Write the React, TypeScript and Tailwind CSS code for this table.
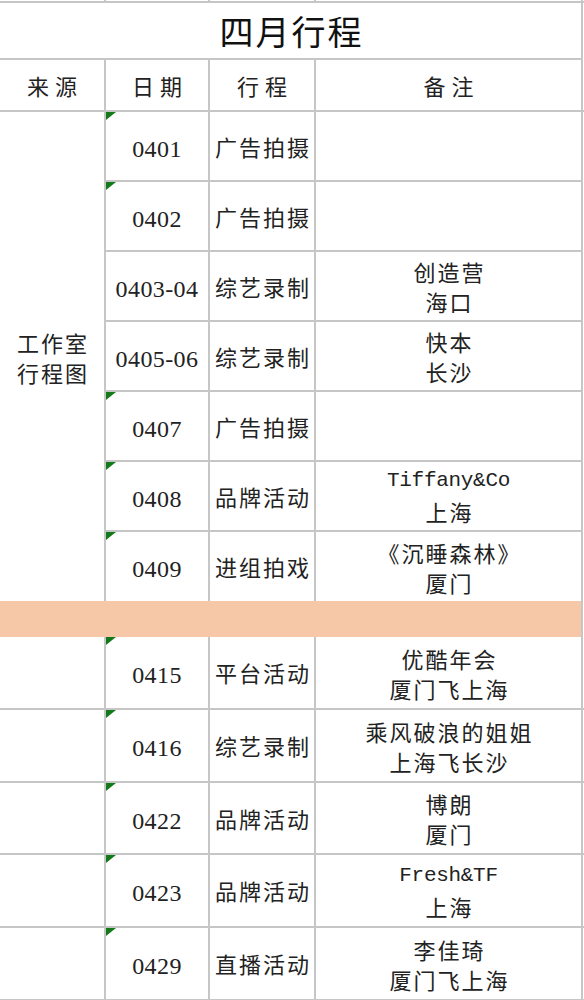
const cjk = { fontFamily: '"Noto Sans CJK SC", "Noto Sans", sans-serif' };

type Row = {
  date: string;
  kind: string;
  note: string[];
  mark: boolean;
  h: string;
};

const firstBlock: Row[] = [
  { date: "0401", kind: "广告拍摄", note: [], mark: true, h: "h-[70px]" },
  { date: "0402", kind: "广告拍摄", note: [], mark: true, h: "h-[70px]" },
  { date: "0403-04", kind: "综艺录制", note: ["创造营", "海口"], mark: false, h: "h-[70px]" },
  { date: "0405-06", kind: "综艺录制", note: ["快本", "长沙"], mark: false, h: "h-[70px]" },
  { date: "0407", kind: "广告拍摄", note: [], mark: true, h: "h-[70px]" },
  { date: "0408", kind: "品牌活动", note: ["Tiffany&Co", "上海"], mark: true, h: "h-[70px]" },
  { date: "0409", kind: "进组拍戏", note: ["《沉睡森林》", "厦门"], mark: true, h: "h-[69px]" },
];

const secondBlock: Row[] = [
  { date: "0415", kind: "平台活动", note: ["优酷年会", "厦门飞上海"], mark: true, h: "h-[73px]" },
  { date: "0416", kind: "综艺录制", note: ["乘风破浪的姐姐", "上海飞长沙"], mark: true, h: "h-[73px]" },
  { date: "0422", kind: "品牌活动", note: ["博朗", "厦门"], mark: true, h: "h-[72px]" },
  { date: "0423", kind: "品牌活动", note: ["Fresh&TF", "上海"], mark: true, h: "h-[73px]" },
  { date: "0429", kind: "直播活动", note: ["李佳琦", "厦门飞上海"], mark: true, h: "h-[73px]" },
];

const line = "border-[#c6c6c6]";

// little green corner flag excel puts on "number stored as text" cells
const Flag = () => (
  <svg className="absolute left-0 top-0" width="10" height="8" viewBox="0 0 10 8">
    <polygon points="0,0 10,0 0,8" fill="#13791a" />
  </svg>
);

const NoteLine = ({ text }: { text: string }) =>
  /^[A-Za-z&]+$/.test(text) ? (
    <span className="text-[21px] font-normal leading-[30px] tracking-[-0.3px]" style={{ fontFamily: '"Liberation Mono", monospace' }}>
      {text}
    </span>
  ) : (
    <span className="text-[22px] leading-[30px] tracking-[2px] pl-[2px]" style={cjk}>
      {text}
    </span>
  );

const RowCells = ({ row }: { row: Row }) => (
  <>
    <div className={`relative flex w-[104px] items-center justify-center border-r-2 ${line}`}>
      {row.mark && <Flag />}
      <span className="pt-[5px] text-[24px] font-normal leading-none tracking-[0.4px]" style={{ fontFamily: '"Liberation Serif", serif' }}>
        {row.date}
      </span>
    </div>
    <div className={`flex w-[106px] items-center justify-center border-r-2 ${line}`}>
      <span className="text-[22px] tracking-[2px] pl-[2px]" style={cjk}>
        {row.kind}
      </span>
    </div>
    <div className={`flex w-[267px] flex-col items-center justify-center border-r-2 ${line}`}>
      {row.note.map((t) => (
        <NoteLine key={t} text={t} />
      ))}
    </div>
  </>
);

export default function App() {
  return (
    <div className="w-[584px] h-[1000px] overflow-hidden bg-white text-[#222]">
      {/* tail of the row above */}
      <div className={`flex h-[3px] border-b-2 ${line}`}>
        <div className={`w-[106px] border-r-2 ${line}`} />
        <div className={`w-[104px] border-r-2 ${line}`} />
        <div className={`w-[106px] border-r-2 ${line}`} />
        <div className={`w-[267px] border-r-2 ${line}`} />
      </div>

      <div className={`flex h-[57px] w-[583px] items-center justify-center border-b-2 border-r-2 ${line}`}>
        <span className="text-[34px] tracking-[2px] pl-[2px] text-[#111]" style={cjk}>
          四月行程
        </span>
      </div>

      <div className={`flex h-[52px] border-b-2 ${line}`} style={cjk}>
        {["来源", "日期", "行程", "备注"].map((t, i) => (
          <div
            key={t}
            className={`flex items-center justify-center border-r-2 ${line} ${
              i === 0 ? "w-[106px]" : i === 1 ? "w-[104px]" : i === 2 ? "w-[106px]" : "w-[267px]"
            }`}
          >
            <span className="text-[22px] tracking-[6px] pl-[6px]">{t}</span>
          </div>
        ))}
      </div>

      <div className="flex">
        <div className={`flex w-[106px] flex-col items-center justify-center border-r-2 ${line}`} style={cjk}>
          <span className="text-[22px] leading-[30px] tracking-[2px] pl-[2px]">工作室</span>
          <span className="text-[22px] leading-[30px] tracking-[2px] pl-[2px]">行程图</span>
        </div>
        <div className="flex flex-col">
          {firstBlock.map((row, i) => (
            <div
              key={row.date}
              className={`flex ${row.h} ${i < firstBlock.length - 1 ? `border-b-2 ${line}` : ""}`}
            >
              <RowCells row={row} />
            </div>
          ))}
        </div>
      </div>

      <div className={`h-[36px] w-[583px] border-r-2 ${line} bg-[#f7c8a7]`} />

      {secondBlock.map((row) => (
        <div key={row.date} className={`flex ${row.h} border-b-2 ${line}`}>
          <div className={`w-[106px] border-r-2 ${line}`} />
          <RowCells row={row} />
        </div>
      ))}
    </div>
  );
}
